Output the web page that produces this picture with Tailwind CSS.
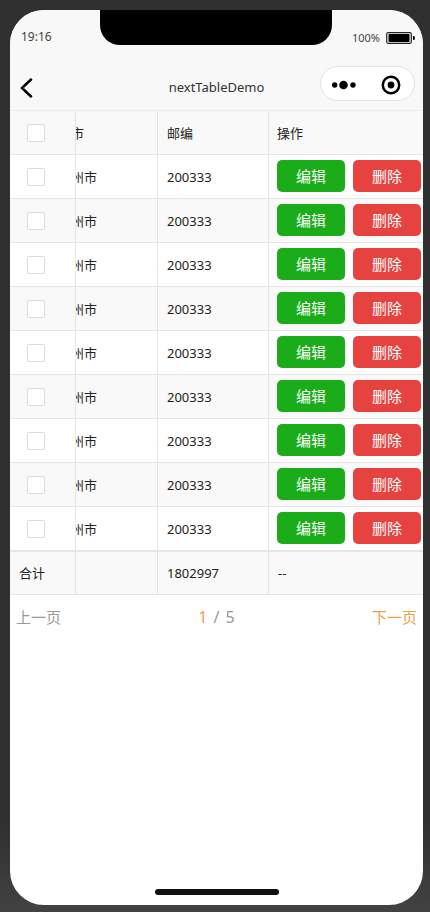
<!DOCTYPE html>
<html lang="zh-CN">
<head>
<meta charset="utf-8">
<meta name="viewport" content="width=device-width, initial-scale=1">
<title>nextTableDemo</title>
<script src="https://cdn.jsdelivr.net/npm/@tailwindcss/browser@4"></script>
</head>
<body class="flex min-h-screen flex-col bg-linear-to-b from-[#303030] from-90% to-[#424242] pt-[10px] pr-[7px] pb-[7px] pl-[10px] font-['Noto_Sans','Noto_Sans_CJK_SC',sans-serif] text-[13px] text-[#222]">
<main class="flex flex-1 flex-col overflow-hidden rounded-[34px] bg-white">
  <header class="border-b border-[#ececec] bg-[#f8f8f8]">
    <div class="grid h-[52px] grid-cols-[90px_1fr_91px] items-start">
      <time class="pt-[17px] pl-[11px] text-xs leading-5 text-[#444]">19:16</time>
      <div class="h-[35px] rounded-b-[20px] bg-black"></div>
      <div class="flex items-center justify-end gap-[6px] pt-[18px] pr-2 text-[11px] leading-5 text-[#444]">
        <span>100%</span>
        <svg class="h-3 w-[29px]" viewBox="0 0 29 12" aria-hidden="true"><rect x=".7" y=".7" width="24.6" height="10.6" rx="1.5" fill="none" stroke="#222" stroke-width="1.2"/><rect x="2.5" y="2" width="21" height="8" rx="1" fill="#000"/><path d="M27 4h.5q1.5 0 1.5 2t-1.5 2H27z" fill="#000"/></svg>
      </div>
    </div>
    <div class="grid h-12 grid-cols-[1fr_auto_1fr] items-start px-2">
      <button type="button" aria-label="返回" class="mt-4 w-6">
        <svg class="h-5 w-4" viewBox="0 0 16 20" fill="none" stroke="#000" stroke-width="2.5" stroke-linecap="round"><path d="M13 1.5 4 10l9 8.5"/></svg>
      </button>
      <h1 class="mt-[15px] leading-5 text-[#333]">nextTableDemo</h1>
      <div class="mt-1 flex h-[35px] w-[95px] items-center justify-around justify-self-end rounded-full border border-[#e2e2e2] bg-white">
        <button type="button" aria-label="更多"><svg class="h-6 w-6" viewBox="0 0 24 24"><circle cx="2.7" cy="13" r="2.7"/><circle cx="11.5" cy="13" r="4.3"/><circle cx="21" cy="13" r="2.7"/></svg></button>
        <button type="button" aria-label="关闭"><svg class="h-6 w-6" viewBox="0 0 24 24"><circle cx="12" cy="13" r="8.2" fill="none" stroke="#000" stroke-width="2.5"/><circle cx="12" cy="13" r="3.4"/></svg></button>
      </div>
    </div>
  </header>

  <table class="w-full table-fixed border-separate border-spacing-0 text-left leading-5 [&_td]:border-b [&_td]:border-[#e6e6e6] [&_th]:border-b [&_th]:border-[#e6e6e6] [&_th]:font-normal">
    <colgroup><col class="w-[66px]"><col class="w-[82px]"><col class="w-[111px]"><col></colgroup>
    <thead class="bg-[#f9f9f9]">
      <tr class="h-11">
        <th class="border-r pl-[17px]"><input type="checkbox" aria-label="全选" class="block size-[18px] appearance-none rounded-[2px] border border-[#dcdcdc] bg-white"></th>
        <th class="overflow-hidden border-r"><span class="-ml-[5px] block">市</span></th>
        <th class="border-r pl-[9px]">邮编</th>
        <th class="pl-2">操作</th>
      </tr>
    </thead>
    <tbody id="rows"></tbody>
    <tfoot class="bg-[#f9f9f9]">
      <tr class="h-11 [&>td]:border-t">
        <td class="border-r pl-[9px]">合计</td>
        <td class="border-r"></td>
        <td class="border-r pl-[9px]">1802997</td>
        <td class="pl-[9px]">--</td>
      </tr>
    </tfoot>
  </table>
  <template id="row">
    <tr class="h-11 even:bg-[#f9f9f9]">
      <td class="border-r pl-[17px]"><input type="checkbox" aria-label="选择此行" class="block size-[18px] appearance-none rounded-[2px] border border-[#dcdcdc] bg-white"></td>
      <td class="overflow-hidden border-r"><span class="-ml-[5px] block">州市</span></td>
      <td class="border-r pl-[9px]">200333</td>
      <td class="pb-px pl-2"><div class="flex gap-2 text-[15px] text-white">
        <button type="button" class="h-8 w-[68px] rounded-[5px] bg-[#1aad19]">编辑</button>
        <button type="button" class="h-8 w-[68px] rounded-[5px] bg-[#e64340]">删除</button>
      </div></td>
    </tr>
  </template>

  <nav aria-label="分页" class="grid grid-cols-3 px-[6px] pt-3 text-[15px] leading-5 text-[#999]">
    <button type="button" class="justify-self-start">上一页</button>
    <p class="flex justify-center gap-[6px] text-base leading-5"><span class="text-[#eea04c]">1</span><span>/</span><span>5</span></p>
    <button type="button" class="justify-self-end text-[#eea04c]">下一页</button>
  </nav>
  <div class="mx-auto mt-auto mb-[10px] h-[6px] w-[124px] rounded-full bg-[#111]"></div>
</main>
<script>
  const body = document.getElementById('rows');
  const row = document.getElementById('row');
  for (let i = 0; i < 9; i++) body.append(row.content.cloneNode(true));
</script>
</body>
</html>
